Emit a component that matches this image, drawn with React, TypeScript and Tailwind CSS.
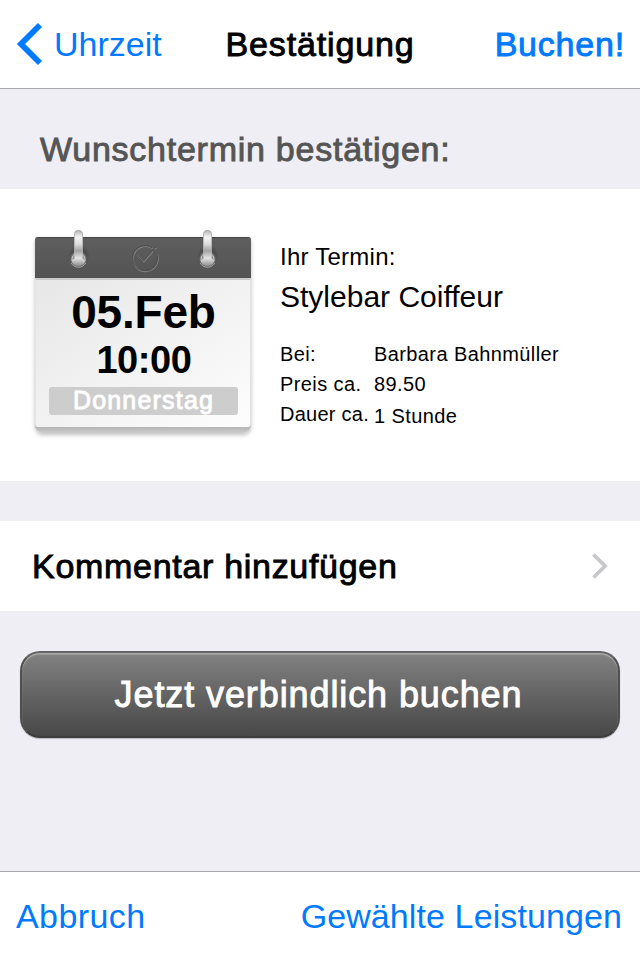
import React from "react";

const medium = "[-webkit-text-stroke:0.9px_currentColor]";

function Ring({ x, id }: { x: number; id: string }) {
  return (
    <g transform={`translate(${x} 0)`}>
      <ellipse cx="0.5" cy="27" rx="10.5" ry="12" fill={`url(#${id}-shade)`} />
      <circle cx="0" cy="30" r="8.4" fill={`url(#${id}-hole)`} />
      <path d="M-7.300 34a8.400 8.400 0 0 0 14.600 0" fill="none" stroke="#a3a3a3" strokeWidth="1" />
      <path d="M-4.500 5a4.500 4 0 0 1 9 0V25q2.500 2.500 2.500 6a7 6 0 0 1-14 0q0-3.500 2.500-6z" fill={`url(#${id}-metal)`} />
      <path d="M-4.500 25-6.800 31l3-1.500zM4.500 25 6.800 31l-3-1.500z" fill="#666" opacity=".6" />
      <path d="M-4 5a4 3.500 0 0 1 8 0V25M-4 5V25" fill="none" stroke="#a5a5a5" strokeWidth="1" opacity=".7" />
      <defs>
        <linearGradient id={`${id}-metal`} x1="0" y1="0" x2="0" y2="1">
          <stop offset="0" stopColor="#b2b2b2" />
          <stop offset=".2" stopColor="#f4f4f4" />
          <stop offset=".38" stopColor="#dedede" />
          <stop offset=".58" stopColor="#a2a2a2" />
          <stop offset=".78" stopColor="#e4e4e4" />
          <stop offset="1" stopColor="#8e8e8e" />
        </linearGradient>
        <radialGradient id={`${id}-hole`}>
          <stop offset="0" stopColor="#888" />
          <stop offset=".75" stopColor="#858585" />
          <stop offset="1" stopColor="#5c5c5c" />
        </radialGradient>
        <radialGradient id={`${id}-shade`}>
          <stop offset=".5" stopColor="#333" stopOpacity=".6" />
          <stop offset="1" stopColor="#333" stopOpacity="0" />
        </radialGradient>
      </defs>
    </g>
  );
}

function ClockMark() {
  return (
    <>
      <path d="M117 18.700a12.500 12.500 0 1 0 4.500 5.300" />
      <path d="M102 24.500 108.500 32 117.500 21.500" />
      <path d="M119.500 19.500 121 18" />
    </>
  );
}

function Calendar() {
  return (
    <div className="relative mt-12 ml-[35px] h-[204px] w-[216px] shrink-0">
      <div className="flex h-[196px] flex-col overflow-hidden rounded-t-[3px] rounded-b-[8px] bg-linear-to-b from-[#b5b5b5] from-97% to-[#cccccc] shadow-[0_2px_4px_rgba(0,0,0,0.25)]">
        <div className="h-[41px] shrink-0 border-t border-[#464646] bg-linear-to-b from-[#5e5e5e] to-[#535353]" />
        <div className="flex h-[149px] flex-col items-center rounded-b-[3px] border-x border-t-2 border-x-[#e2e2e2] border-t-[#c9c9c9] bg-linear-to-br from-[#e7e7e7] to-[#fdfdfd]">
          <div className="mt-[7px] h-[50px] pl-[1px] text-[46px] leading-[50px] font-bold tracking-[-0.2px]">05.Feb</div>
          <div className="h-[44px] pl-[2px] text-[38px] leading-[46px] font-bold tracking-[-0.4px]">10:00</div>
          <div className={`mt-[6px] h-[28px] w-[189px] rounded-[3px] bg-[#cdcdcd] pl-[1px] text-center text-[25px] leading-[26px] tracking-[1.2px] text-white ${medium}`}>
            Donnerstag
          </div>
        </div>
      </div>
      <svg className="absolute -top-2 left-0" width="216" height="50" viewBox="0 0 216 50" fill="none">
        <Ring x={43.5} id="left" />
        <Ring x={172.5} id="right" />
        <g transform="translate(0.500 0.800)" stroke="#808080" strokeWidth="1.400">
          <ClockMark />
        </g>
        <g stroke="#4b4b4b" strokeWidth="1">
          <ClockMark />
        </g>
      </svg>
    </div>
  );
}

export default function App() {
  return (
    <div className="flex h-[960px] w-[640px] flex-col overflow-hidden bg-[#efeef4] font-['Liberation_Sans',Arial,sans-serif] text-black">
      <header className="grid h-[89px] shrink-0 grid-cols-[200px_240px_200px] border-b border-[#a9a9ac] bg-white text-[34px] leading-[88px]">
        <button className="flex items-center pl-[16px] text-[#007aff]">
          <svg width="28" height="44" viewBox="0 0 28 44" fill="none">
            <path d="M24 3 5 22 24 41" stroke="currentColor" strokeWidth="5.800" />
          </svg>
          <span className="ml-[10px]">Uhrzeit</span>
        </button>
        <h1 className={`text-center tracking-[0.85px] ${medium}`}>Bestätigung</h1>
        <button className={`pr-[15px] text-right tracking-[0.8px] text-[#007aff] ${medium}`}>Buchen!</button>
      </header>

      <h2 className={`h-[100px] shrink-0 pt-[20px] pl-[40px] text-[34px] leading-[80px] tracking-[0.75px] text-[#555] ${medium}`}>
        Wunschtermin bestätigen:
      </h2>

      <section className="flex h-[292px] shrink-0 bg-white">
        <Calendar />
        <div className="ml-[29px] pt-[52px]">
          <div className="text-[24px] leading-[32px] tracking-[0.25px]">Ihr Termin:</div>
          <div className="mt-[3px] text-[30px] leading-[41px]">Stylebar Coiffeur</div>
          <dl className="mt-[22px] grid grid-cols-[94px_auto] text-[20px] leading-[30px] tracking-[0.4px] whitespace-nowrap">
            <dt>Bei:</dt>
            <dd>Barbara Bahnmüller</dd>
            <dt>Preis ca.</dt>
            <dd>89.50</dd>
            <dt className="tracking-[0.25px]">Dauer ca.</dt>
            <dd className="leading-[34px]">1 Stunde</dd>
          </dl>
        </div>
      </section>

      <button className="mt-10 flex h-[90px] shrink-0 items-center justify-between bg-white pr-[31px] pl-[32px]">
        <span className={`text-[34px] leading-[90px] tracking-[0.7px] ${medium}`}>Kommentar hinzufügen</span>
        <svg width="18" height="28" viewBox="0 0 18 28" fill="none">
          <path d="M2.500 2.500 14 14 2.500 25.500" stroke="#c7c7cc" strokeWidth="3.800" />
        </svg>
      </button>

      <button
        className={`mx-5 mt-10 h-[87px] shrink-0 rounded-[20px] border-2 border-t-[#656565] border-r-[#4e4e4e] border-b-[#3d3d3d] border-l-[#4e4e4e] bg-linear-to-b from-[#828282] to-[#484848] pr-[3px] text-[36px] leading-[83px] tracking-[0.9px] text-white shadow-[inset_0_1.5px_1px_#b0b0b0,0_1px_1px_#b9b9bd] ${medium}`}
      >
        Jetzt verbindlich buchen
      </button>

      <footer className="mt-auto flex h-[89px] shrink-0 justify-between border-t border-[#a7a7aa] bg-white pr-[18px] pl-[16px] text-[34px] leading-[88px] text-[#007aff]">
        <button className="tracking-[0.4px]">Abbruch</button>
        <button className="tracking-[0.1px]">Gewählte Leistungen</button>
      </footer>
    </div>
  );
}
